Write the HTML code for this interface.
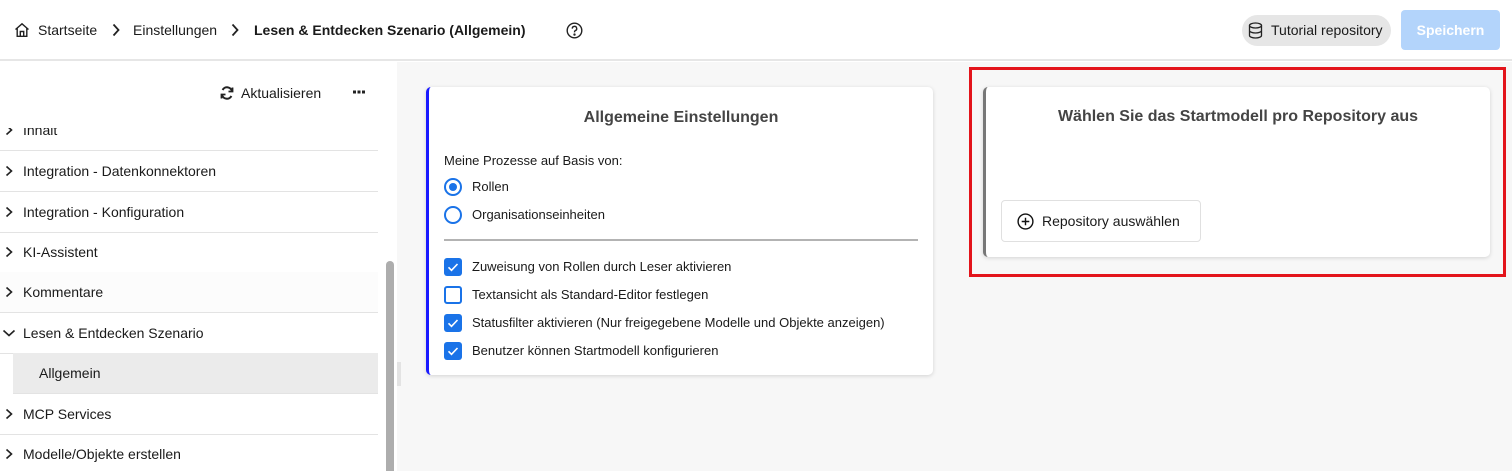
<!DOCTYPE html>
<html><head><meta charset="utf-8"><style>
*{box-sizing:border-box;margin:0;padding:0}
body{width:1512px;height:471px;overflow:hidden;font-family:"Liberation Sans",Arial,sans-serif;font-size:14px;color:#1a1a1a;background:#fff;position:relative}
.abs{position:absolute}
.hdr{left:0;top:0;width:1512px;height:61px;border-bottom:2px solid #e6e6e6;background:#fff}
.side{left:0;top:62px;width:397px;height:409px;background:#fff;overflow:hidden}
.main{left:397px;top:62px;width:1115px;height:409px;background:#f7f7f7}
.row{position:absolute;left:0;width:378px;height:41px;border-bottom:1px solid #e3e3e3;line-height:40px;padding-left:23px;font-size:14px}
.row svg{position:absolute;left:4px;top:14px}
.card{background:#fff;border-radius:5px;box-shadow:0 1px 4px rgba(0,0,0,.15)}
.cb{position:absolute;left:0;width:18px;height:18px;border-radius:3px;background:#1a73e8}
.cbe{background:#fff;border:2px solid #1a73e8}
.opt{position:absolute;left:46px;font-size:13px;color:#1a1a1a}
</style></head><body>
<div class="abs hdr">
  <svg class="abs" style="left:14px;top:22px" width="16" height="16" viewBox="0 0 16 16" fill="none" stroke="#222" stroke-width="1.4"><path d="M1.5 7.5L8 1.8l6.5 5.7M3.2 6v8.3h9.6V6M6.3 14.3V9.5h3.4v4.8"/></svg>
  <div class="abs" style="left:38px;top:22px">Startseite</div>
  <svg class="abs" style="left:111px;top:23px" width="10" height="14" viewBox="0 0 10 14" fill="none" stroke="#222" stroke-width="1.8"><path d="M2.5 1.5l5 5.5-5 5.5"/></svg>
  <div class="abs" style="left:133px;top:22px">Einstellungen</div>
  <svg class="abs" style="left:230px;top:23px" width="10" height="14" viewBox="0 0 10 14" fill="none" stroke="#222" stroke-width="1.8"><path d="M2.5 1.5l5 5.5-5 5.5"/></svg>
  <div class="abs" style="left:254px;top:22px;font-weight:bold">Lesen &amp; Entdecken Szenario (Allgemein)</div>
  <svg class="abs" style="left:566px;top:22px" width="17" height="17" viewBox="0 0 17 17" fill="none" stroke="#222" stroke-width="1.4"><circle cx="8.5" cy="8.5" r="7.3"/><path d="M6.3 6.6a2.2 2.2 0 1 1 3 2c-.6.3-.8.7-.8 1.4v.4"/><circle cx="8.5" cy="12.6" r=".5" fill="#222"/></svg>
  <div class="abs" style="left:1242px;top:15px;width:149px;height:31px;border-radius:16px;background:#e6e6e6"></div>
  <svg class="abs" style="left:1248px;top:22px" width="15" height="17" viewBox="0 0 15 17" fill="none" stroke="#222" stroke-width="1.3"><ellipse cx="7.5" cy="3.5" rx="6" ry="2.5"/><path d="M1.5 3.5v10c0 1.4 2.7 2.5 6 2.5s6-1.1 6-2.5v-10M1.5 8.5c0 1.4 2.7 2.5 6 2.5s6-1.1 6-2.5"/></svg>
  <div class="abs" style="left:1271px;top:22px">Tutorial repository</div>
  <div class="abs" style="left:1401px;top:10px;width:99px;height:40px;border-radius:4px;background:#b3d4fb;color:#fff;font-weight:bold;text-align:center;line-height:40px">Speichern</div>
</div>
<div class="abs side">
  <svg class="abs" style="left:220px;top:24px" width="14" height="14" viewBox="0 0 14 14" fill="none" stroke="#222" stroke-width="2"><path d="M12 5.5A5 5 0 0 0 2.6 4M2 8.5A5 5 0 0 0 11.4 10"/><path d="M12.5 1.5v4h-4M1.5 12.5v-4h4" stroke-width="1.8"/></svg>
  <div class="abs" style="left:241px;top:23px">Aktualisieren</div>
  <svg class="abs" style="left:353px;top:28px" width="12" height="4" viewBox="0 0 12 4" fill="#222"><rect x="0" y="0.5" width="3" height="3"/><rect x="4.5" y="0.5" width="3" height="3"/><rect x="9" y="0.5" width="3" height="3"/></svg>
  <div class="abs" style="left:0;top:66px;width:397px;height:343px;overflow:hidden">
    <div class="row" style="top:-18px">Inhalt<svg width="10" height="12" viewBox="0 0 10 12" fill="none" stroke="#222" stroke-width="1.6"><path d="M2.5 1.5l5 4.5-5 4.5"/></svg></div>
    <div class="row" style="top:23px">Integration - Datenkonnektoren<svg width="10" height="12" viewBox="0 0 10 12" fill="none" stroke="#222" stroke-width="1.6"><path d="M2.5 1.5l5 4.5-5 4.5"/></svg></div>
    <div class="row" style="top:64px">Integration - Konfiguration<svg width="10" height="12" viewBox="0 0 10 12" fill="none" stroke="#222" stroke-width="1.6"><path d="M2.5 1.5l5 4.5-5 4.5"/></svg></div>
    <div class="row" style="top:104px">KI-Assistent<svg width="10" height="12" viewBox="0 0 10 12" fill="none" stroke="#222" stroke-width="1.6"><path d="M2.5 1.5l5 4.5-5 4.5"/></svg></div>
    <div class="row" style="top:144px;background:#fcfcfc">Kommentare<svg width="10" height="12" viewBox="0 0 10 12" fill="none" stroke="#222" stroke-width="1.6"><path d="M2.5 1.5l5 4.5-5 4.5"/></svg></div>
    <div class="row" style="top:185px">Lesen &amp; Entdecken Szenario<svg style="left:2px;top:15px" width="14" height="10" viewBox="0 0 14 10" fill="none" stroke="#222" stroke-width="1.6"><path d="M1.5 2.5l5.5 5 5.5-5"/></svg></div>
    <div class="row" style="top:225px;left:13px;width:365px;background:#ebebeb;padding-left:26px">Allgemein</div>
    <div class="row" style="top:266px">MCP Services<svg width="10" height="12" viewBox="0 0 10 12" fill="none" stroke="#222" stroke-width="1.6"><path d="M2.5 1.5l5 4.5-5 4.5"/></svg></div>
    <div class="row" style="top:306px">Modelle/Objekte erstellen<svg width="10" height="12" viewBox="0 0 10 12" fill="none" stroke="#222" stroke-width="1.6"><path d="M2.5 1.5l5 4.5-5 4.5"/></svg></div>
  </div>
  <div class="abs" style="left:386px;top:199px;width:8px;height:220px;border-radius:4px;background:#adadad"></div>
</div>
<div class="abs main">
  <div class="abs" style="left:0;top:300px;width:4px;height:24px;background:#e3e3e3"></div>
  <div class="abs card" style="left:29px;top:25px;width:507px;height:288px;border-left:3px solid #1a1aff">
    <div class="abs" style="left:0;width:504px;top:22px;text-align:center;font-size:16px;font-weight:bold;color:#444">Allgemeine Einstellungen</div>
    <div class="abs" style="left:15px;top:66px;font-size:13px">Meine Prozesse auf Basis von:</div>
    <div class="abs" style="left:15px;top:91px;width:18px;height:18px;border-radius:50%;border:2px solid #1a73e8"><div style="margin:3px;width:8px;height:8px;border-radius:50%;background:#1a73e8"></div></div>
    <div class="opt" style="left:43px;top:92px">Rollen</div>
    <div class="abs" style="left:15px;top:119px;width:18px;height:18px;border-radius:50%;border:2px solid #1a73e8"></div>
    <div class="opt" style="left:43px;top:120px">Organisationseinheiten</div>
    <div class="abs" style="left:15px;top:152px;width:474px;height:2px;background:#b3b3b3"></div>
    <div class="abs" style="left:15px;top:170px;width:480px;height:110px">
      <div class="cb" style="top:1px"><svg width="18" height="18" viewBox="0 0 18 18" fill="none" stroke="#fff" stroke-width="1.6"><path d="M4.5 9.3l3 3 6-6.3"/></svg></div>
      <div class="opt" style="left:28px;top:2px">Zuweisung von Rollen durch Leser aktivieren</div>
      <div class="cb cbe" style="top:29px"></div>
      <div class="opt" style="left:28px;top:30px">Textansicht als Standard-Editor festlegen</div>
      <div class="cb" style="top:57px"><svg width="18" height="18" viewBox="0 0 18 18" fill="none" stroke="#fff" stroke-width="1.6"><path d="M4.5 9.3l3 3 6-6.3"/></svg></div>
      <div class="opt" style="left:28px;top:58px">Statusfilter aktivieren (Nur freigegebene Modelle und Objekte anzeigen)</div>
      <div class="cb" style="top:85px"><svg width="18" height="18" viewBox="0 0 18 18" fill="none" stroke="#fff" stroke-width="1.6"><path d="M4.5 9.3l3 3 6-6.3"/></svg></div>
      <div class="opt" style="left:28px;top:86px">Benutzer können Startmodell konfigurieren</div>
    </div>
  </div>
  <div class="abs" style="left:572px;top:5px;width:537px;height:210px;border:3px solid #e3141b"></div>
  <div class="abs card" style="left:586px;top:25px;width:507px;height:170px;border-left:3px solid #777">
    <div class="abs" style="left:0;width:504px;top:21px;text-align:center;font-size:16px;font-weight:bold;color:#444">Wählen Sie das Startmodell pro Repository aus</div>
    <div class="abs" style="left:15px;top:113px;width:200px;height:42px;border:1px solid #e0e0e0;border-radius:4px"></div>
    <svg class="abs" style="left:31px;top:126px" width="17" height="17" viewBox="0 0 17 17" fill="none" stroke="#111" stroke-width="1.4"><circle cx="8.5" cy="8.5" r="7.4"/><path d="M8.5 4.7v7.6M4.7 8.5h7.6"/></svg>
    <div class="abs" style="left:56px;top:126px">Repository auswählen</div>
  </div>
</div>
</body></html>
